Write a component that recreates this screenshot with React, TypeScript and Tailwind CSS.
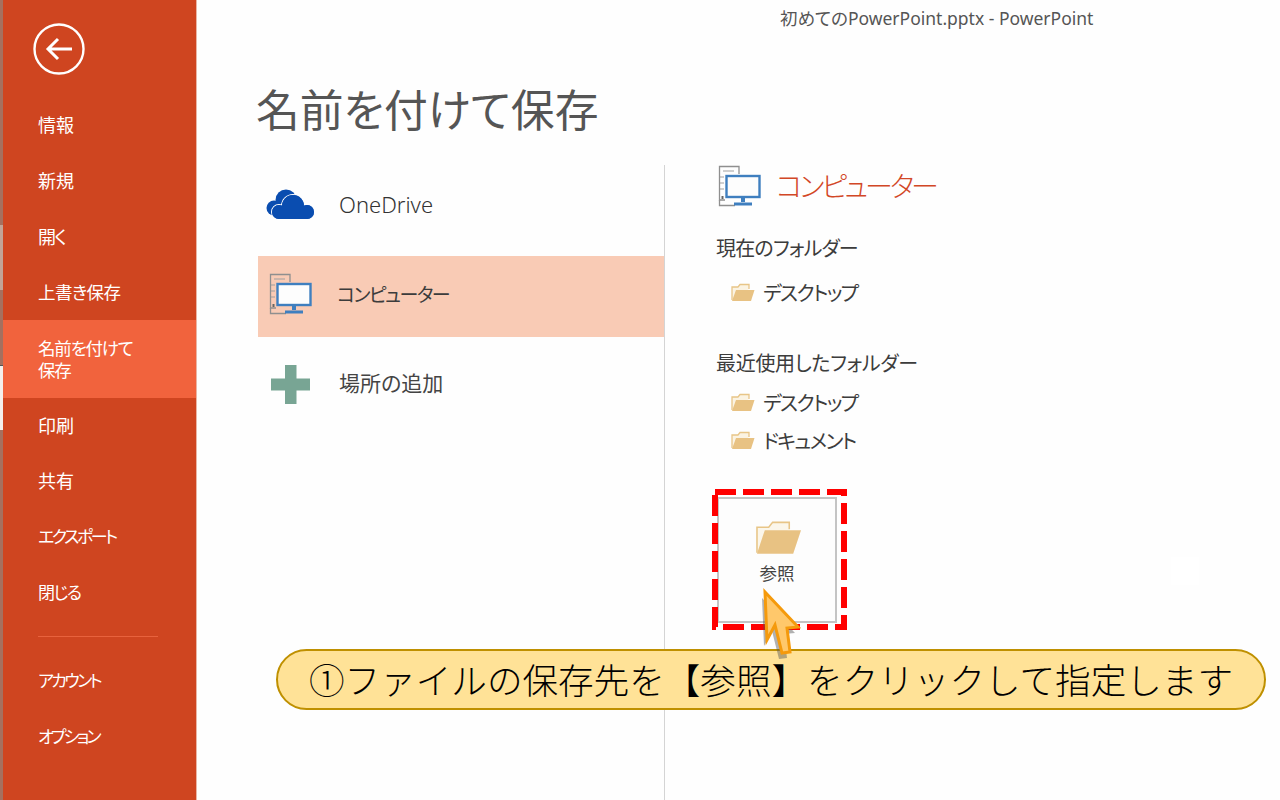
import React from "react";

const jp = "[font-family:'Noto_Sans','Noto_Sans_CJK_JP',sans-serif] [font-feature-settings:'palt']";

function ComputerIcon() {
  return (
    <svg width="44" height="44" viewBox="0 0 44 44" className="shrink-0">
      <path d="M7 35H1.5V1.5H21V9" fill="none" stroke="#8f8f8f" strokeWidth="1.3" />
      <path d="M5 6H16M2 12H6M2 18H6M2 24H6" stroke="#a0a0a0" strokeWidth="1.2" />
      <rect x="3.5" y="31" width="2" height="3" fill="#666" />
      <path d="M1.5 35v5.5H17" fill="none" stroke="#8f8f8f" strokeWidth="1.3" />
      <rect x="8.5" y="11" width="33" height="21" fill="#fdfdfd" stroke="#3f7fbf" strokeWidth="2.4" />
      <rect x="23" y="32" width="4" height="5" fill="#3f7fbf" />
      <rect x="16" y="37.5" width="18" height="3" fill="#3f7fbf" />
    </svg>
  );
}

function SmallFolder() {
  return (
    <svg width="24" height="19" viewBox="0 0 24 19" className="mb-[3px] shrink-0">
      <path d="M1 17V4h6l2-2.5h9V6" fill="#fbf3e2" stroke="#e8c587" strokeWidth="1.3" />
      <path d="M1 18l4-11h18.5l-3.5 11z" fill="#e8c283" />
    </svg>
  );
}

function FolderRow({ label }: { label: string }) {
  return (
    <div className="flex h-[38px] items-center gap-[8px] pl-[15px] text-[20px] tracking-[-1.6px] text-[#3c3c3c]">
      <SmallFolder />
      <span>{label}</span>
    </div>
  );
}

function NavItem({ label, className }: { label: string; className?: string }) {
  return <div className={`flex h-[56px] items-center pl-[35px] text-white ${className ?? "text-[18px]"}`}>{label}</div>;
}

export default function App() {
  return (
    <div className={`relative flex h-[800px] w-[1280px] overflow-hidden bg-[#fefefe] ${jp}`}>
      {/* window edge behind the backstage */}
      <div className="flex w-[3px] shrink-0 flex-col bg-[#a5705f]">
        <div className="h-[225px]" />
        <div className="h-[65px] bg-[#c2a497]" />
        <div className="h-[75px]" />
        <div className="h-[65px] border-t border-[#555] bg-[#f4efec]" />
      </div>

      {/* sidebar */}
      <nav className="flex w-[193px] shrink-0 flex-col bg-[#cf4520]">
        <div className="h-[97px] pl-[30px] pt-[23px]">
          <svg width="52" height="52" viewBox="0 0 52 52">
            <circle cx="26" cy="26" r="24.5" fill="none" stroke="#fff" strokeWidth="2.4" />
            <path d="M15 26H39M25 16L15 26L25 36" fill="none" stroke="#fff" strokeWidth="3" />
          </svg>
        </div>
        <NavItem label="情報" />
        <NavItem label="新規" />
        <NavItem label="開く" className="text-[18px] tracking-[-1.5px]" />
        <div className="flex h-[55px] items-center pl-[35px] text-[17.5px] tracking-[-0.6px] text-white">上書き保存</div>
        <div className="flex h-[78px] items-center bg-[#f1633d] pl-[35px] text-[17.5px] leading-[22px] tracking-[-1.2px] text-white">
          <span>
            名前を付けて
            <br />
            保存
          </span>
        </div>
        <NavItem label="印刷" />
        <div className="flex h-[55px] items-center pl-[35px] text-[18px] text-white">共有</div>
        <NavItem label="エクスポート" className="text-[17px] tracking-[-2.5px]" />
        <NavItem label="閉じる" className="text-[17px] tracking-[-1.5px]" />
        <div className="ml-[35px] mt-[15px] h-px w-[120px] bg-[#e8623d]" />
        <div className="mt-[16px]">
          <NavItem label="アカウント" className="text-[17px] tracking-[-2.6px]" />
          <NavItem label="オプション" className="text-[17px] tracking-[-2.8px]" />
        </div>
      </nav>
      <div className="w-px shrink-0 bg-[#e9b6a6]" />

      {/* main */}
      <main className="flex min-w-0 flex-1 flex-col">
        <div className="flex h-[36px] items-center pl-[583px] text-[17.5px] text-[#555]">
          初めてのPowerPoint.pptx - PowerPoint
        </div>
        <h1 className="ml-[59px] mt-[42px] text-[43.8px] font-normal leading-[64px] text-[#555]">名前を付けて保存</h1>
        <div className="mt-[23px] flex flex-1">
          {/* place list */}
          <div className="ml-[61px] w-[406px] shrink-0 pt-[4px]">
            <div className="flex h-[70px] items-center gap-[24px] pl-[8px] text-[22px] font-light text-[#333]">
              <svg width="49" height="31" viewBox="0 0 49 31" className="shrink-0">
                <g fill="#0a4db0">
                  <circle cx="20" cy="11" r="10.5" />
                  <circle cx="8" cy="19" r="7.5" />
                  <rect x="8" y="12" width="22" height="14.5" />
                </g>
                <g fill="#0a4db0" stroke="#fefefe" strokeWidth="2" paintOrder="stroke">
                  <circle cx="27" cy="17" r="11" />
                  <circle cx="13" cy="23" r="7" />
                  <circle cx="41" cy="23" r="7" />
                </g>
                <g fill="#0a4db0">
                  <circle cx="27" cy="17" r="11" />
                  <circle cx="13" cy="23" r="7" />
                  <circle cx="41" cy="23" r="7" />
                  <rect x="13" y="18" width="28" height="12" />
                </g>
              </svg>
              <span>OneDrive</span>
            </div>
            <div className="mt-[17px] flex h-[81px] items-center gap-[24px] bg-[#f9cbb5] pb-[3px] pl-[11px] text-[19px] tracking-[-1.5px] text-[#3c3c3c]">
              <ComputerIcon />
              <span>コンピューター</span>
            </div>
            <div className="flex h-[94px] items-center gap-[29px] pl-[13px] text-[21px] text-[#444]">
              <svg width="39" height="39" viewBox="0 0 39 39" className="shrink-0">
                <path d="M14 0H25.5V13.5H39V25.5H25.5V39H14V25.5H0V13.5H14Z" fill="#78a594" />
              </svg>
              <span>場所の追加</span>
            </div>
          </div>

          <div className="w-px shrink-0 bg-[#d4d4d4]" />

          {/* details */}
          <div className="flex-1 pl-[51px]">
            <div className="flex h-[44px] items-center gap-[14px] pl-[2px] text-[28px] font-light tracking-[-3px] text-[#d24726]">
              <ComputerIcon />
              <span className="pb-[2px]">コンピューター</span>
            </div>
            <div className="mt-[22px] h-[36px] text-[20px] leading-[36px] tracking-[-0.8px] text-[#3c3c3c]">現在のフォルダー</div>
            <div className="mt-[8px]">
              <FolderRow label="デスクトップ" />
            </div>
            <div className="mt-[33px] h-[36px] text-[20px] leading-[36px] tracking-[-0.3px] text-[#3c3c3c]">最近使用したフォルダー</div>
            <div className="mt-[3px]">
              <FolderRow label="デスクトップ" />
              <FolderRow label="ドキュメント" />
            </div>
            <div className="ml-[1px] mt-[36px] flex h-[126px] w-[120px] flex-col items-center border-2 border-[#c4c4c4] bg-[#fdfdfd] pt-[22px]">
              <svg width="45" height="34" viewBox="0 0 46 34" className="ml-[3px]">
                <path d="M1 32V6h12l4-5h17v7" fill="#fbf6ea" stroke="#e8c587" strokeWidth="1.6" />
                <path d="M1 33l8-24h37l-8 24z" fill="#e8c283" />
              </svg>
              <div className="mt-[2px] text-[17.5px] leading-[32px] text-[#444]">参照</div>
            </div>
          </div>
        </div>
      </main>

      {/* annotations laid over the screenshot */}
      <div className="absolute left-[1171px] top-[557px] h-[28px] w-[28px] bg-white" />
      <svg className="absolute left-[710px] top-[487px]" width="140" height="146" viewBox="0 0 140 146">
        <rect x="5" y="5" width="129" height="135" fill="none" stroke="#ff0000" strokeWidth="6" strokeDasharray="21 7" />
      </svg>
      <div className="absolute left-[276px] top-[649px] flex h-[61px] w-[990px] items-center whitespace-nowrap rounded-[31px] border-2 border-[#bf9000] bg-[#ffe297] pl-[31px] pt-[3px] text-[35.6px] font-light text-black [font-feature-settings:normal]">
        ①ファイルの保存先を【参照】をクリックして指定します
      </div>
      <svg className="absolute left-[755px] top-[582px]" width="56" height="82" viewBox="755 582 56 82">
        <polygon points="762,598 795,633 784,634 787,658 779,659 772,631 764,646" fill="#555" opacity="0.45" />
        <polygon points="765,592 798,627 787,628 790,652 782,653 775,625 767,640" fill="#ffc86b" stroke="#f59a0c" strokeWidth="3" strokeLinejoin="miter" />
      </svg>
    </div>
  );
}
